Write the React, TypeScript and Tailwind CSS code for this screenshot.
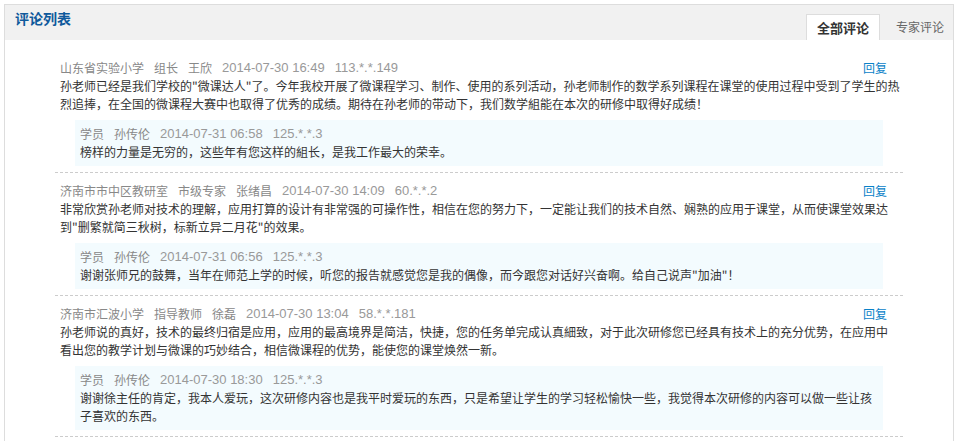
import React from "react";

type Reply = { meta: string[]; date: string; ip: string; lines: string[] };
type Item = { meta: string[]; date: string; ip: string; lines: string[]; reply: Reply };

const items: Item[] = [
  {
    meta: ["山东省实验小学", "组长", "王欣"],
    date: "2014-07-30 16:49",
    ip: "113.*.*.149",
    lines: [
      '孙老师已经是我们学校的"微课达人"了。今年我校开展了微课程学习、制作、使用的系列活动，孙老师制作的数学系列课程在课堂的使用过程中受到了学生的热',
      "烈追捧，在全国的微课程大赛中也取得了优秀的成绩。期待在孙老师的带动下，我们数学組能在本次的研修中取得好成绩！",
    ],
    reply: {
      meta: ["学员", "孙传伦"],
      date: "2014-07-31 06:58",
      ip: "125.*.*.3",
      lines: ["榜样的力量是无穷的，这些年有您这样的組长，是我工作最大的荣幸。"],
    },
  },
  {
    meta: ["济南市市中区教研室", "市级专家", "张绪昌"],
    date: "2014-07-30 14:09",
    ip: "60.*.*.2",
    lines: [
      "非常欣赏孙老师对技术的理解，应用打算的设计有非常强的可操作性，相信在您的努力下，一定能让我们的技术自然、娴熟的应用于课堂，从而使课堂效果达",
      '到"删繁就简三秋树，标新立异二月花"的效果。',
    ],
    reply: {
      meta: ["学员", "孙传伦"],
      date: "2014-07-31 06:56",
      ip: "125.*.*.3",
      lines: ['谢谢张师兄的鼓舞，当年在师范上学的时候，听您的报告就感觉您是我的偶像，而今跟您对话好兴奋啊。给自己说声"加油"！'],
    },
  },
  {
    meta: ["济南市汇波小学", "指导教师", "徐磊"],
    date: "2014-07-30 13:04",
    ip: "58.*.*.181",
    lines: [
      "孙老师说的真好，技术的最终归宿是应用，应用的最高境界是简洁，快捷，您的任务单完成认真細致，对于此次研修您已经具有技术上的充分优势，在应用中",
      "看出您的教学计划与微课的巧妙结合，相信微课程的优势，能使您的课堂焕然一新。",
    ],
    reply: {
      meta: ["学员", "孙传伦"],
      date: "2014-07-30 18:30",
      ip: "125.*.*.3",
      lines: [
        "谢谢徐主任的肯定，我本人爱玩，这次研修内容也是我平时爱玩的东西，只是希望让学生的学习轻松愉快一些，我觉得本次研修的内容可以做一些让孩",
        "子喜欢的东西。",
      ],
    },
  },
];

const cjk = { fontFamily: '"Noto Sans CJK SC", "Noto Sans", sans-serif' };
const latin = { fontFamily: '"Liberation Sans", Arial, sans-serif' };

function Meta({ meta, date, ip }: { meta: string[]; date: string; ip: string }) {
  return (
    <div className="flex items-center h-[18px] leading-[18px] whitespace-nowrap">
      {meta.map((m, i) => (
        <span key={i} className="mr-[10px] text-[12px] text-[#888]">
          {m}
        </span>
      ))}
      <span className="mr-[10px] text-[13px] text-[#999]" style={latin}>
        {date}
      </span>
      <span className="text-[13px] text-[#999]" style={latin}>
        {ip}
      </span>
    </div>
  );
}

export default function App() {
  return (
    <div className="bg-white min-h-[441px] pl-[4px] pt-[4px]" style={cjk}>
      <div className="w-[950px] border border-[#dddddd] bg-white pb-[20px]">
        <div className="flex justify-between h-[35px] bg-[#f1f1f1] pl-[10px]">
          <div className="self-start mt-[1px] h-[24px] leading-[24px] text-[14px] font-bold text-[#0f5a9c]">
            评论列表
          </div>
          <div className="self-end flex items-end mr-[9px]">
            <div className="w-[74px] h-[26px] border-t border-l border-r border-[#dddddd] bg-white text-center leading-[25px] text-[13px] font-bold text-[#333]">
              全部评论
            </div>
            <div className="ml-[16px] h-[26px] leading-[25px] text-[12px] text-[#666]">专家评论</div>
          </div>
        </div>

        <div className="pt-[19px] pl-[50px]">
          {items.map((it, idx) => (
            <div
              key={idx}
              className={`w-[848px] pl-[5px] pr-[16px] pb-[6px] border-b border-dashed border-[#cccccc] ${
                idx === 0 ? "" : "pt-[9px]"
              }`}
            >
              <div className="flex justify-between items-center">
                <Meta meta={it.meta} date={it.date} ip={it.ip} />
                <a className="text-[12px] leading-[18px] text-[#0a82c8] cursor-pointer">回复</a>
              </div>
              <div className="text-[12px] leading-[18px] text-[#333]">
                {it.lines.map((l, i) => (
                  <div key={i} className="whitespace-nowrap">
                    {l}
                  </div>
                ))}
              </div>
              <div className="mt-[7px] ml-[15px] mr-[4px] bg-[#f3fbfe] px-[5px] py-[5px]">
                <Meta meta={it.reply.meta} date={it.reply.date} ip={it.reply.ip} />
                <div className="text-[12px] leading-[18px] text-[#333]">
                  {it.reply.lines.map((l, i) => (
                    <div key={i} className="whitespace-nowrap">
                      {l}
                    </div>
                  ))}
                </div>
              </div>
            </div>
          ))}
        </div>
      </div>
    </div>
  );
}
